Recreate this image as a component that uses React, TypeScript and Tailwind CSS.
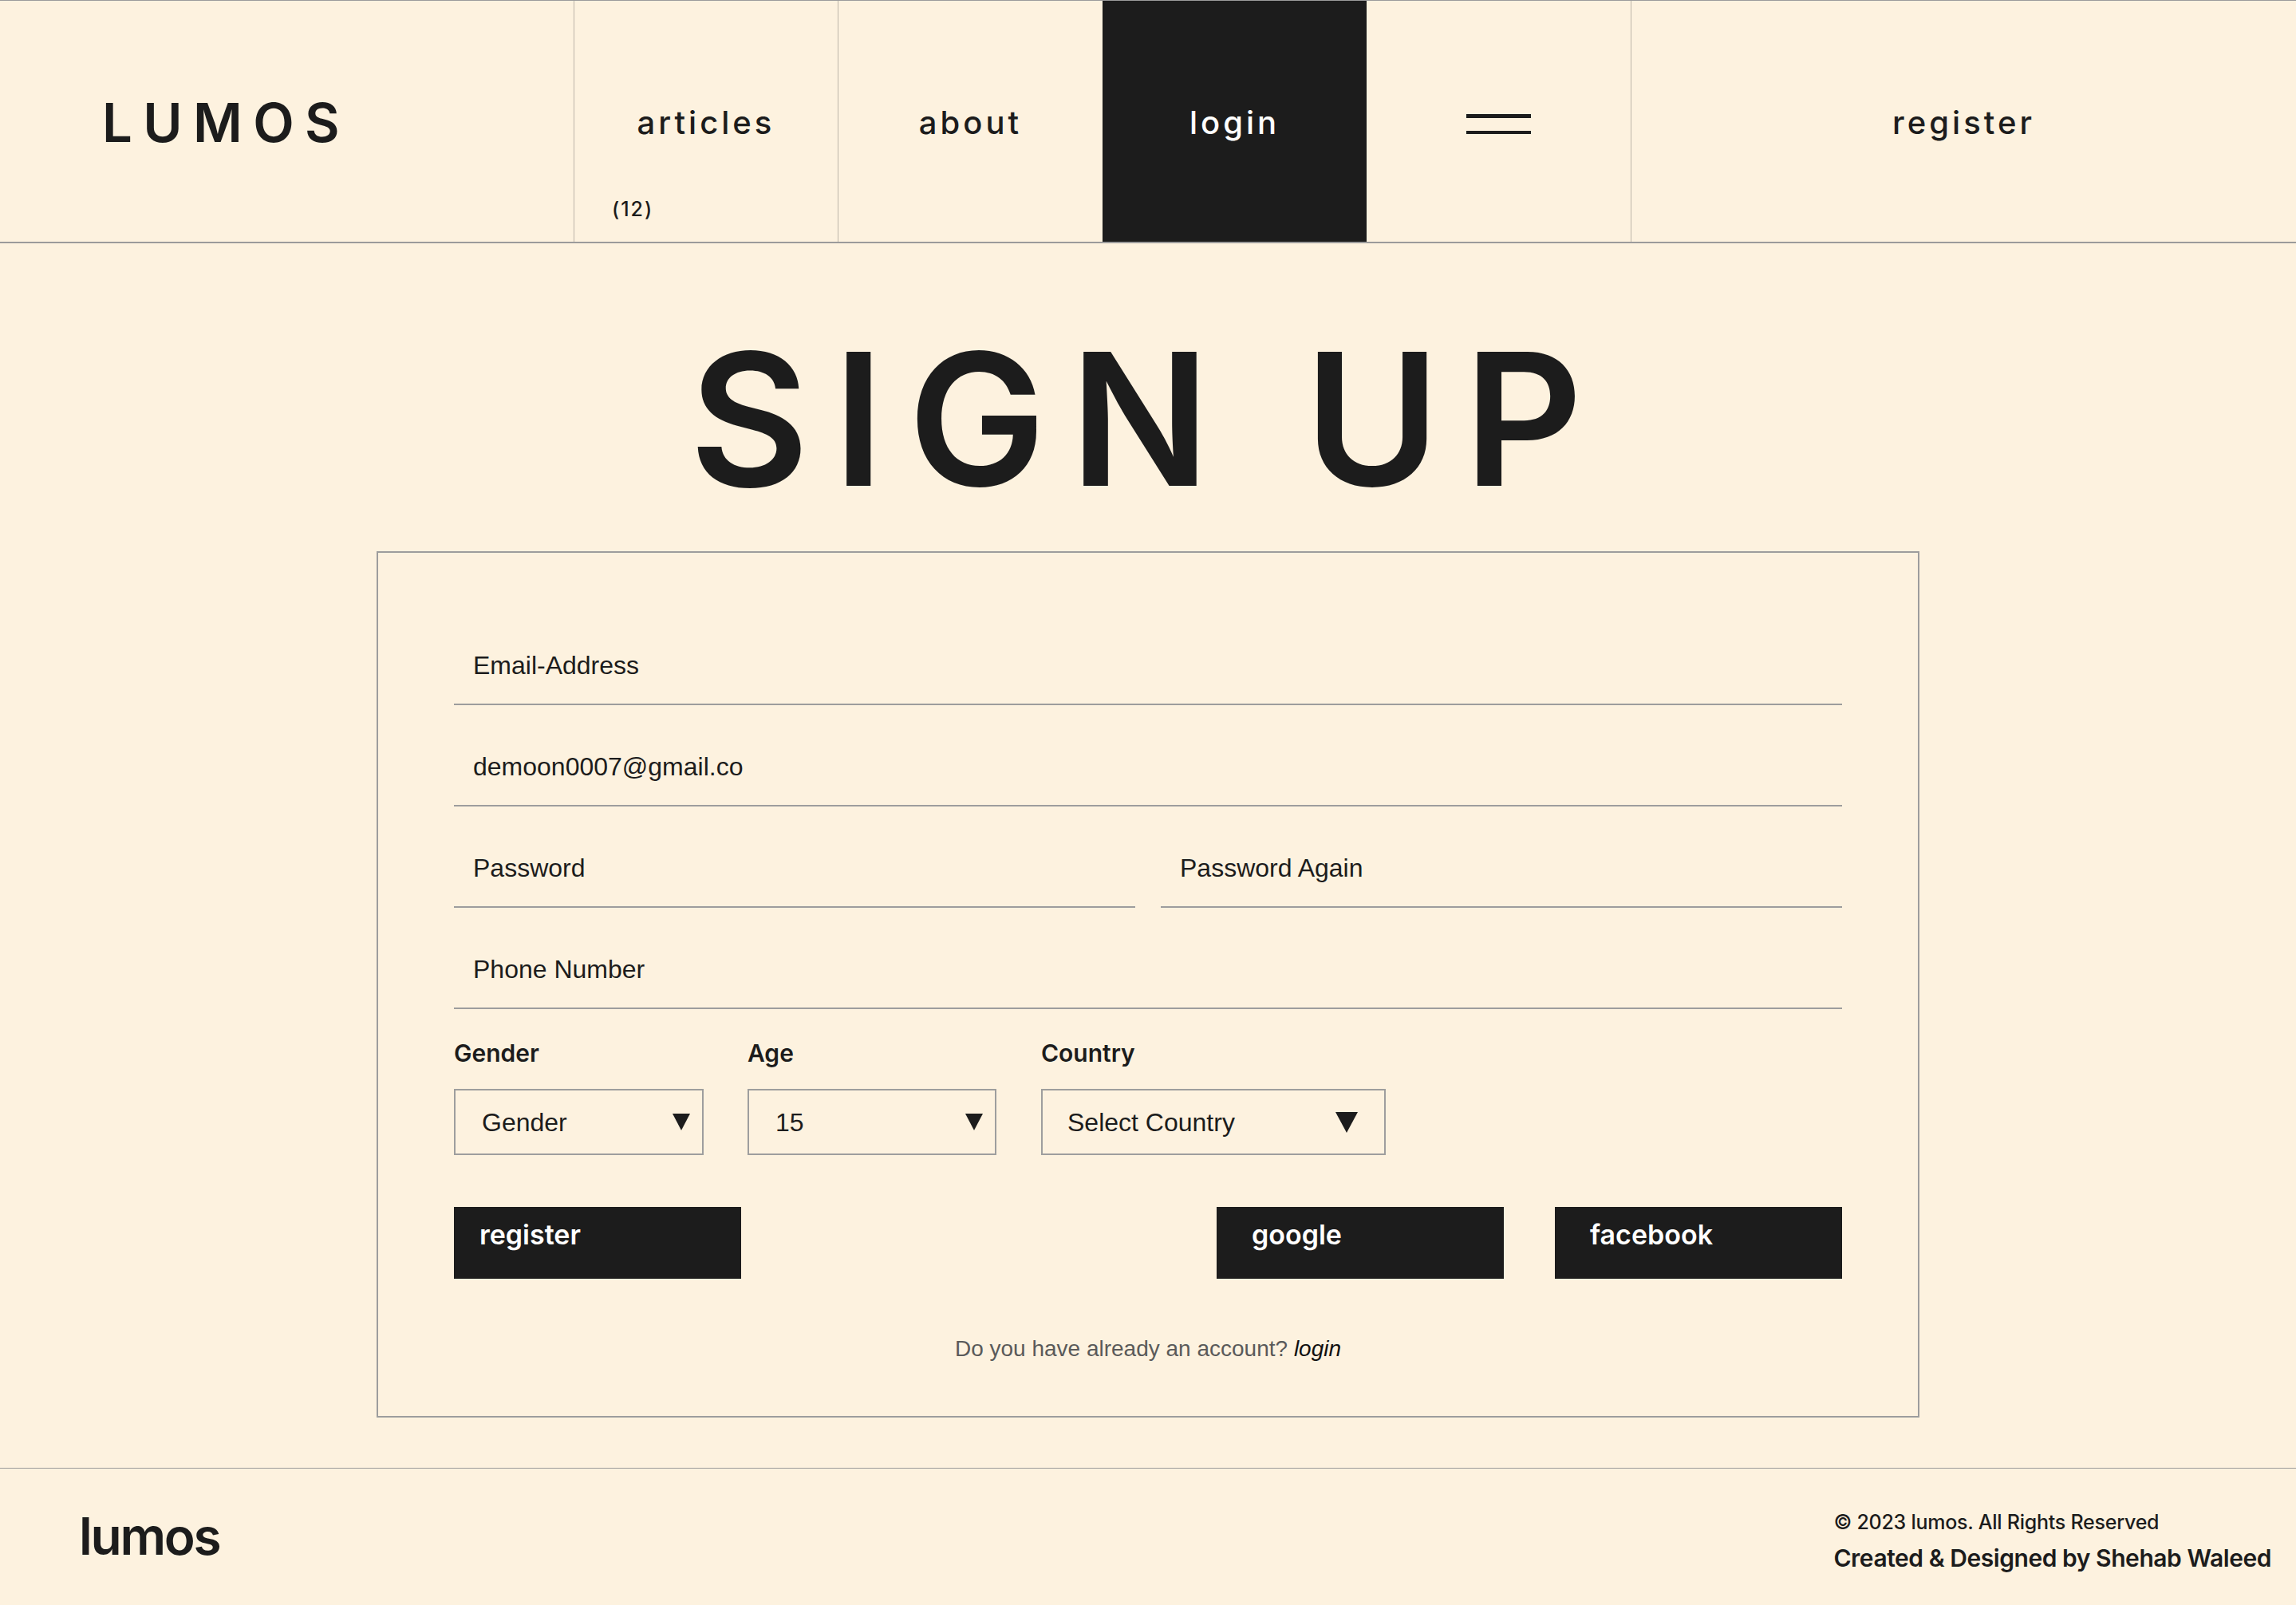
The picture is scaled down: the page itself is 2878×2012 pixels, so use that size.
const NAV_TEXT = "pt-[3px] text-[40px] font-medium tracking-[0.1em]";

function NavCell({ label, width, active, badge }: { label: string; width: string; active?: boolean; badge?: string }) {
  return (
    <div
      className={
        active
          ? `relative flex ${width} items-center justify-center bg-[#1c1c1c] text-white`
          : `relative flex ${width} items-center justify-center border-l border-[#bdb5a9]`
      }
    >
      <span className={NAV_TEXT}>{label}</span>
      {badge && (
        <span className="absolute bottom-[22px] left-[47px] text-[25px] font-medium tracking-[0.08em]">{badge}</span>
      )}
    </div>
  );
}

function Header() {
  return (
    <header className="flex h-[305px] border-t border-b-2 border-[#9b9b9b]">
      <div className="flex w-[719px] items-center pl-[128px] pt-[4px] text-[67px] font-semibold tracking-[0.2em]">
        LUMOS
      </div>
      <NavCell label="articles" width="w-[331px]" badge="(12)" />
      <NavCell label="about" width="w-[332px]" />
      <NavCell label="login" width="w-[331px]" active />
      <div className="flex w-[331px] flex-col items-center justify-center gap-[16px] pt-[6px]">
        <span className="block h-[5px] w-[81px] bg-[#1c1c1c]" />
        <span className="block h-[4px] w-[81px] bg-[#1c1c1c]" />
      </div>
      <NavCell label="register" width="flex-1" />
    </header>
  );
}

function Field({ placeholder, value }: { placeholder: string; value?: string }) {
  return (
    <input
      readOnly
      placeholder={placeholder}
      defaultValue={value}
      className="block h-[98px] w-full border-b-2 border-[#9d9d9d] bg-transparent pl-[24px] font-['Liberation_Sans',Arial,sans-serif] text-[32px] text-[#1c1c1c] outline-none placeholder:text-[#1c1c1c]"
    />
  );
}

function Arrow({ w, h }: { w: number; h: number }) {
  return (
    <svg width={w} height={h} viewBox={`0 0 ${w} ${h}`} className="shrink-0">
      <polygon points={`0,0 ${w},0 ${w / 2},${h}`} fill="#1c1c1c" />
    </svg>
  );
}

function SelectBox({ label, value, width, arrow }: { label: string; value: string; width: string; arrow: "sm" | "lg" }) {
  return (
    <div className="flex w-[368px] flex-col">
      <span className="text-[30px] font-semibold">{label}</span>
      <div
        className={
          arrow === "lg"
            ? `mt-[22px] flex h-[83px] ${width} items-center justify-between border-2 border-[#9e9e9e] pl-[31px] pr-[33px]`
            : `mt-[22px] flex h-[83px] ${width} items-center justify-between border-2 border-[#9e9e9e] pl-[33px] pr-[15px]`
        }
      >
        <span className="font-['Liberation_Sans',Arial,sans-serif] text-[32px]">{value}</span>
        {arrow === "lg" ? <Arrow w={28} h={26} /> : <Arrow w={22} h={21} />}
      </div>
    </div>
  );
}

function DarkButton({ label, pad }: { label: string; pad: string }) {
  return (
    <button
      type="button"
      className={`flex h-[90px] w-[360px] items-start bg-[#1c1c1c] pt-[9px] ${pad} text-[34px] font-semibold text-white`}
    >
      {label}
    </button>
  );
}

function SignupForm() {
  return (
    <form className="mt-[50px] w-[1934px] border-2 border-[#9d9d9d] px-[95px] pt-[93px] pb-[63px]">
      <div className="flex flex-col gap-[29px]">
        <Field placeholder="Email-Address" />
        <Field placeholder="Email-Address" value="demoon0007@gmail.co" />
        <div className="grid grid-cols-2 gap-x-[32px]">
          <Field placeholder="Password" />
          <Field placeholder="Password Again" />
        </div>
        <Field placeholder="Phone Number" />
      </div>

      <div className="mt-[33px] flex">
        <SelectBox label="Gender" value="Gender" width="w-[313px]" arrow="sm" />
        <SelectBox label="Age" value="15" width="w-[312px]" arrow="sm" />
        <SelectBox label="Country" value="Select Country" width="w-[432px]" arrow="lg" />
      </div>

      <div className="mt-[65px] flex items-start justify-between">
        <DarkButton label="register" pad="pl-[32px]" />
        <div className="flex gap-[64px]">
          <DarkButton label="google" pad="pl-[44px]" />
          <DarkButton label="facebook" pad="pl-[44px]" />
        </div>
      </div>

      <p className="mt-[67px] text-center font-['Liberation_Sans',Arial,sans-serif] text-[28px] text-[#5a5a5a]">
        Do you have already an account? <em className="text-[#111]">login</em>
      </p>
    </form>
  );
}

function Footer() {
  return (
    <footer className="mt-[63px] flex h-[170px] items-center justify-between border-t border-[#9b9b9b] pl-[99px] pr-[31px]">
      <span className="text-[64px] font-semibold tracking-[-0.035em]">lumos</span>
      <div className="flex flex-col gap-[3px] pt-[15px]">
        <span className="text-[25px] font-medium tracking-[-0.01em]">© 2023 lumos. All Rights Reserved</span>
        <span className="text-[30px] font-semibold tracking-[-0.015em]">Created &amp; Designed by Shehab Waleed</span>
      </div>
    </footer>
  );
}

export default function App() {
  return (
    <div className="min-h-screen w-full bg-[#fdf2df] font-['Inter',sans-serif] text-[#1c1c1c]">
      <Header />
      <main className="flex flex-col items-center">
        <h1 className="mt-[105px] text-[231px] font-semibold leading-none tracking-[0.13em]">SIGN UP</h1>
        <SignupForm />
      </main>
      <Footer />
    </div>
  );
}
